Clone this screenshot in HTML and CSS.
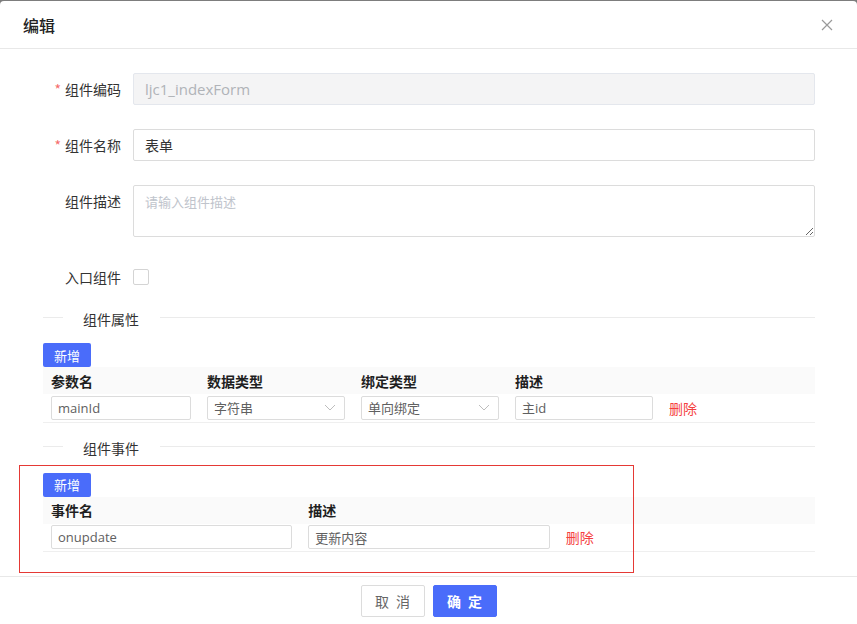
FILE: index.html
```html
<!DOCTYPE html>
<html lang="zh">
<head>
<meta charset="utf-8">
<title>编辑</title>
<link rel="stylesheet" href="styles.css">
</head>
<body>
<div class="dialog">
  <div class="dlg-header">
    <span class="dlg-title">编辑</span>
    <span class="dlg-close">
      <svg width="12" height="12" viewBox="0 0 12 12"><path d="M1 1L11 11M11 1L1 11" stroke="#9a9a9a" stroke-width="1.2" fill="none"/></svg>
    </span>
  </div>
  <div class="dlg-body">
    <div class="form-row">
      <label class="form-label"><span class="req">*</span>组件编码</label>
      <input class="inp inp-disabled" value="ljc1_indexForm" disabled>
    </div>
    <div class="form-row">
      <label class="form-label"><span class="req">*</span>组件名称</label>
      <input class="inp" value="表单">
    </div>
    <div class="form-row">
      <label class="form-label">组件描述</label>
      <textarea class="txt" placeholder="请输入组件描述"></textarea>
    </div>
    <div class="form-row form-row-check">
      <label class="form-label">入口组件</label>
      <span class="chk"></span>
    </div>

    <div class="divider"><span class="div-line div-left"></span><span class="div-text">组件属性</span><span class="div-line div-right"></span></div>
    <button class="btn-add">新增</button>
    <table class="tbl tbl5">
      <colgroup><col class="c-first"><col><col><col><col></colgroup>
      <thead><tr><th>参数名</th><th>数据类型</th><th>绑定类型</th><th>描述</th><th></th></tr></thead>
      <tbody>
        <tr>
          <td><input class="sinp" value="mainId"></td>
          <td><div class="ssel"><span>字符串</span><svg width="12" height="7" viewBox="0 0 12 7"><path d="M1 1L6 6L11 1" stroke="#bdbdbd" stroke-width="1" fill="none"/></svg></div></td>
          <td><div class="ssel"><span>单向绑定</span><svg width="12" height="7" viewBox="0 0 12 7"><path d="M1 1L6 6L11 1" stroke="#bdbdbd" stroke-width="1" fill="none"/></svg></div></td>
          <td><input class="sinp" value="主id"></td>
          <td><a class="del">删除</a></td>
        </tr>
      </tbody>
    </table>

    <div class="divider div2"><span class="div-line div-left"></span><span class="div-text">组件事件</span><span class="div-line div-right"></span></div>
    <button class="btn-add">新增</button>
    <table class="tbl tbl3">
      <thead><tr><th>事件名</th><th>描述</th><th></th></tr></thead>
      <tbody>
        <tr>
          <td><input class="sinp" value="onupdate"></td>
          <td><input class="sinp" value="更新内容"></td>
          <td><a class="del">删除</a></td>
        </tr>
      </tbody>
    </table>
  </div>
  <div class="dlg-footer">
    <button class="btn btn-cancel">取 消</button>
    <button class="btn btn-ok">确 定</button>
  </div>
  <div class="mark-box"></div>
</div>
</body>
</html>
```
FILE: styles.css
```css
* { box-sizing: border-box; }
html, body { margin: 0; padding: 0; }
body {
  background: #7d7d7d;
  overflow: hidden;
  height: 624px;
  font-family: "Open Sans", "Noto Sans CJK SC", sans-serif;
  font-size: 14px;
  color: #333;
}
.dialog {
  position: relative;
  margin-top: 1px;
  background: #fff;
  border-radius: 4px;
  min-height: 630px;
}
.dlg-header {
  height: 48px;
  border-bottom: 1px solid #e8e8e8;
  display: flex;
  align-items: center;
  justify-content: space-between;
  padding: 0 24px 0 23px;
}
.dlg-title {
  font-family: "Noto Sans CJK SC", sans-serif;
  font-size: 16px;
  font-weight: 500;
  color: #222;
  line-height: 22px;
  margin-top: 1px;
}
.dlg-close { display: flex; }
.dlg-body {
  padding: 24px 42px 24px 43px;
}
.form-row {
  display: grid;
  grid-template-columns: 90px 1fr;
  margin-bottom: 24px;
}
.form-label {
  text-align: right;
  padding-right: 12px;
  line-height: 32px;
  font-family: "Noto Sans CJK SC", sans-serif;
  color: #333;
  white-space: nowrap;
}
.req { color: #f56c6c; margin-right: 4px; }
.inp {
  height: 32px;
  border: 1px solid #dcdcdc;
  border-radius: 2px;
  padding: 0 11px;
  font-family: "Open Sans", "Noto Sans CJK SC", sans-serif;
  font-size: 14px;
  color: #333;
  outline: none;
  width: 100%;
}
.inp-disabled {
  background: #f4f4f5;
  border-color: #e4e7ed;
  color: #b0b3b8;
  font-size: 15px;
}
.txt {
  height: 52px;
  border: 1px solid #dcdcdc;
  border-radius: 2px;
  padding: 5px 11px;
  font-family: "Noto Sans CJK SC", sans-serif;
  font-size: 13px;
  line-height: 22px;
  width: 100%;
  outline: none;
  display: block;
}
.txt::placeholder { color: #c0c4cc; }
.form-row-check { align-items: center; }
.chk {
  width: 16px;
  height: 16px;
  border: 1px solid #d4d4d4;
  border-radius: 2px;
  background: #fff;
}
.divider {
  display: flex;
  align-items: center;
  height: 22px;
  margin: -11px 0 15px;
}
.div2 { margin: 13px 0 15px; }
.div-line { height: 1px; background: #ebebeb; }
.div-left { width: 20px; }
.div-right { flex: 1; }
.div-text {
  padding: 0 21px 0 20px;
  font-family: "Noto Sans CJK SC", sans-serif;
  font-size: 14px;
  color: #333;
  margin-top: 3px;
}
.btn-add {
  display: block;
  width: 48px;
  height: 24px;
  border: none;
  border-radius: 2px;
  background: #4a6cfa;
  color: #fff;
  font-family: "Noto Sans CJK SC", sans-serif;
  font-size: 13px;
  padding: 0;
}
.tbl {
  width: 100%;
  border-collapse: collapse;
  table-layout: fixed;
}
.c-first { width: 156px; }
.tbl th {
  height: 27px;
  background: #fafafa;
  text-align: left;
  padding: 0 8px;
  font-family: "Noto Sans CJK SC", sans-serif;
  font-size: 14px;
  font-weight: 700;
  color: #1f1f1f;
}
.tbl td {
  height: 28px;
  padding: 0 8px;
  border-bottom: 1px solid #efefef;
  vertical-align: middle;
}
.sinp, .ssel {
  width: 100%;
  height: 24px;
  border: 1px solid #dcdcdc;
  border-radius: 2px;
  padding: 0 6px;
  font-family: "Open Sans", "Noto Sans CJK SC", sans-serif;
  font-size: 13px;
  color: #606060;
  outline: none;
  display: block;
  background: #fff;
}
.ssel {
  display: flex;
  align-items: center;
  justify-content: space-between;
  padding: 0 8px 0 6px;
  font-family: "Noto Sans CJK SC", sans-serif;
}
.del {
  color: #f53f3f;
  font-family: "Noto Sans CJK SC", sans-serif;
  font-size: 14px;
  cursor: pointer;
}
.dlg-footer {
  border-top: 1px solid #e8e8e8;
  padding: 8px 0;
  display: flex;
  justify-content: center;
  gap: 8px;
}
.btn {
  width: 64px;
  height: 32px;
  border-radius: 2px;
  font-family: "Noto Sans CJK SC", sans-serif;
  font-size: 14px;
  padding: 0;
  letter-spacing: 2px;
  text-indent: 2px;
}
.btn-cancel {
  background: #fff;
  border: 1px solid #dcdcdc;
  color: #666;
}
.btn-ok {
  background: #4a6cfa;
  border: 1px solid #4a6cfa;
  color: #fff;
  font-weight: 700;
}
.mark-box {
  position: absolute;
  left: 19px;
  top: 464px;
  width: 615px;
  height: 108px;
  border: 1px solid #e53935;
  pointer-events: none;
}
```
